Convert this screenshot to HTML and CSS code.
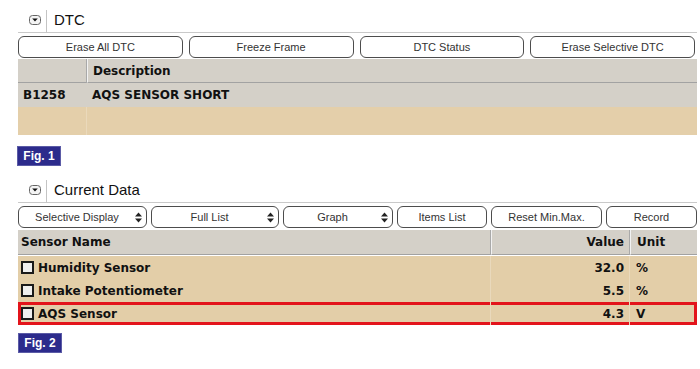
FILE: index.html
```html
<!DOCTYPE html>
<html lang="en">
<head>
    <meta charset="UTF-8">
    <meta name="viewport" content="width=device-width, initial-scale=1.0">
    <title>DTC / Current Data</title>
    <link rel="stylesheet" href="styles.css">
</head>
<body>

<div class="page">
    <div class="panel-title">
        <svg class="toggle" width="12" height="10" viewBox="0 0 12 10">
            <rect x="0.5" y="0.5" width="11" height="9" rx="3" fill="#f4f4f4" stroke="#666"/>
            <path d="M3.2 3.5h5.6L6 6.6z" fill="#111"/>
        </svg>
        <span class="title-sep"></span>
        <span class="title-text">DTC</span>
    </div>

    <div class="btn-row dtc-btns">
        <button class="btn">Erase All DTC</button>
        <button class="btn">Freeze Frame</button>
        <button class="btn">DTC Status</button>
        <button class="btn">Erase Selective DTC</button>
    </div>

    <div class="grid dtc-grid">
        <div class="cell head code"></div>
        <div class="cell head">Description</div>
        <div class="cell gray code">B1258</div>
        <div class="cell gray">AQS SENSOR SHORT</div>
        <div class="cell tan code tall"></div>
        <div class="cell tan tall"></div>
    </div>

    <div class="fig fig-1">Fig. 1</div>

    <div class="panel-title second">
        <svg class="toggle" width="12" height="10" viewBox="0 0 12 10">
            <rect x="0.5" y="0.5" width="11" height="9" rx="3" fill="#f4f4f4" stroke="#666"/>
            <path d="M3.2 3.5h5.6L6 6.6z" fill="#111"/>
        </svg>
        <span class="title-sep"></span>
        <span class="title-text">Current Data</span>
    </div>

    <div class="btn-row data-btns">
        <button class="btn select"><span class="btn-label">Selective Display</span>
            <svg class="arrows" width="7" height="11" viewBox="0 0 7 11"><path d="M3.5 0.5L7 4.6H0z M0 6.4h7L3.5 10.5z" fill="#222"/></svg>
        </button>
        <button class="btn select"><span class="btn-label">Full List</span>
            <svg class="arrows" width="7" height="11" viewBox="0 0 7 11"><path d="M3.5 0.5L7 4.6H0z M0 6.4h7L3.5 10.5z" fill="#222"/></svg>
        </button>
        <button class="btn select"><span class="btn-label">Graph</span>
            <svg class="arrows" width="7" height="11" viewBox="0 0 7 11"><path d="M3.5 0.5L7 4.6H0z M0 6.4h7L3.5 10.5z" fill="#222"/></svg>
        </button>
        <button class="btn">Items List</button>
        <button class="btn">Reset Min.Max.</button>
        <button class="btn">Record</button>
    </div>

    <div class="grid sensor-head">
        <div class="cell head name">Sensor Name</div>
        <div class="cell head value">Value</div>
        <div class="cell head unit">Unit</div>
    </div>

    <div class="sensor-rows">
        <div class="grid sensor-row">
            <div class="cell name"><span class="check"></span>Humidity Sensor</div>
            <div class="cell value">32.0</div>
            <div class="cell unit">%</div>
        </div>
        <div class="grid sensor-row">
            <div class="cell name"><span class="check"></span>Intake Potentiometer</div>
            <div class="cell value">5.5</div>
            <div class="cell unit">%</div>
        </div>
        <div class="grid sensor-row marked">
            <div class="cell name"><span class="check"></span>AQS Sensor</div>
            <div class="cell value">4.3</div>
            <div class="cell unit">V</div>
        </div>
    </div>

    <div class="fig fig-2">Fig. 2</div>
</div>

</body>
</html>
```

FILE: styles.css
```css
body {
    margin: 0;
    font-family: "Liberation Sans", Arial, sans-serif;
    background-color: #fff;
    color: #111;
}

.page {
    width: 679px;
    padding: 10px 0 0 18px;
}

/* section titles */
.panel-title {
    display: flex;
    align-items: center;
    height: 19px;
    padding-bottom: 3px;
    border-bottom: 1px solid #c9c9c9;
}

.panel-title.second {
    margin-top: 14px;
}

.toggle {
    margin-left: 11px;
    display: block;
}

.title-sep {
    align-self: stretch;
    width: 1px;
    margin: 0 7px -3px 5px;
    background-color: #c4c4c4;
}

.title-text {
    font-size: 15px;
    line-height: 1;
    color: #111;
}

/* buttons */
.btn-row {
    display: grid;
    margin-top: 3px;
}

.dtc-btns {
    grid-template-columns: repeat(4, 1fr);
    gap: 6px;
    width: 677px;
}

.data-btns {
    grid-template-columns: 129px 128px 110px 90px 111px 91px;
    gap: 4px;
}

.btn {
    height: 22px;
    padding: 0;
    border: 1px solid #4d4d4d;
    border-radius: 6px;
    background-color: #fff;
    font-family: "Liberation Sans", Arial, sans-serif;
    font-size: 11px;
    color: #333;
}

.btn.select {
    display: flex;
    align-items: center;
}

.btn-label {
    flex: 1;
    text-align: center;
}

.arrows {
    margin-right: 4px;
}

/* grids */
.grid {
    display: grid;
    font-family: "DejaVu Sans", Verdana, sans-serif;
    font-size: 12px;
    font-weight: bold;
}

.cell {
    display: flex;
    align-items: center;
}

.head {
    height: 23px;
    background-color: #d4d0c8;
    border-bottom: 1px solid #a2a2a2;
}

.dtc-grid {
    margin-top: 1px;
    grid-template-columns: 69px 1fr;
}

.dtc-grid .cell {
    padding-left: 5px;
}

.dtc-grid .code {
    border-right: 1px solid #a9a9a9;
}

.dtc-grid .head:not(.code) {
    border-left: 1px solid #f2f2f2;
}

.dtc-grid .gray {
    height: 24px;
    background-color: #d4d0c8;
}

.dtc-grid .gray.code {
    border-right-color: #d4d0c8;
}

.dtc-grid .tan {
    height: 28px;
    background-color: #e4cfaa;
}

.dtc-grid .tan.code {
    border-right-color: #ead9bb;
}

.sensor-head,
.sensor-row {
    grid-template-columns: 473px 139px 1fr;
}

.sensor-head {
    margin-top: 2px;
}

.sensor-head .head {
    height: 24px;
}

.sensor-head .name,
.sensor-head .value {
    border-right: 1px solid #a9a9a9;
}

.sensor-head .value,
.sensor-head .unit {
    border-left: 1px solid #f2f2f2;
}

.sensor-rows {
    margin-top: 1px;
}

.sensor-row {
    height: 23px;
    background-color: #e3cea8;
}

.sensor-row .name,
.sensor-row .value {
    border-right: 1px solid #e9d9bc;
}

.name {
    padding-left: 3px;
}

.value {
    justify-content: flex-end;
    padding-right: 5px;
}

.unit {
    padding-left: 6px;
}

.sensor-row.marked {
    box-shadow: inset 0 0 0 3px #e3141b;
}

.check {
    width: 9px;
    height: 9px;
    margin-right: 4px;
    border: 2px solid #1a1a1a;
    background-color: #efefef;
}

/* figure labels */
.fig {
    width: 42px;
    height: 18px;
    border: 1px solid #5b5ba6;
    background-color: #2c2b8c;
    color: #fff;
    font-family: "Liberation Sans", Arial, sans-serif;
    font-size: 12px;
    font-weight: bold;
    line-height: 18px;
    text-align: center;
}

.fig-1 {
    margin-top: 11px;
    margin-left: -1px;
}

.fig-2 {
    margin-top: 8px;
}
```
